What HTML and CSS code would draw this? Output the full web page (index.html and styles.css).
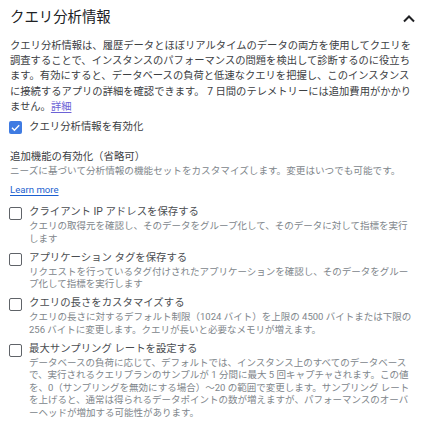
FILE: index.html
```html
<!DOCTYPE html>
<html lang="ja">
<head>
<meta charset="utf-8">
<link rel="stylesheet" href="styles.css">
</head>
<body>
<div class="panel">
  <header class="panel-head">
    <h2 class="panel-title">クエリ分析情報</h2>
    <span class="collapse" aria-label="折りたたむ">
      <svg width="12" height="8" viewBox="0 0 12 8"><polyline points="1,6.5 6,1.5 11,6.5" fill="none" stroke="#202124" stroke-width="2"/></svg>
    </span>
  </header>
  <p class="intro">クエリ分析情報は、履歴データとほぼリアルタイムのデータの両方を使用してクエリを<br>調査することで、インスタンスのパフォーマンスの問題を検出して診断するのに役立ち<br>ます。有効にすると、データベースの負荷と低速なクエリを把握し、このインスタンス<br>に接続するアプリの詳細を確認できます。 7 日間のテレメトリーには追加費用がかかり<br>ません。<a class="link" href="#">詳細</a></p>
  <label class="check-row">
    <span class="box checked">
      <svg width="13" height="13" viewBox="0 0 13 13"><polyline points="3,6.8 5.4,9.2 10.2,4.2" fill="none" stroke="#fff" stroke-width="1.4"/></svg>
    </span>
    <span class="check-label">クエリ分析情報を有効化</span>
  </label>
  <section class="extras">
    <div class="extras-title">追加機能の有効化（省略可）</div>
    <div class="extras-sub">ニーズに基づいて分析情報の機能セットをカスタマイズします。変更はいつでも可能です。</div>
    <a class="more" href="#">Learn more</a>
    <ul class="options">
      <li class="option">
        <span class="box"></span>
        <div class="option-body">
          <div class="option-title">クライアント IP アドレスを保存する</div>
          <div class="option-desc">クエリの取得元を確認し、そのデータをグループ化して、そのデータに対して指標を実行<br>します</div>
        </div>
      </li>
      <li class="option">
        <span class="box"></span>
        <div class="option-body">
          <div class="option-title">アプリケーション タグを保存する</div>
          <div class="option-desc">リクエストを行っているタグ付けされたアプリケーションを確認し、そのデータをグルー<br>プ化して指標を実行します</div>
        </div>
      </li>
      <li class="option">
        <span class="box"></span>
        <div class="option-body">
          <div class="option-title">クエリの長さをカスタマイズする</div>
          <div class="option-desc">クエリの長さに対するデフォルト制限（1024 バイト）を上限の 4500 バイトまたは下限の<br>256 バイトに変更します。クエリが長いと必要なメモリが増えます。</div>
        </div>
      </li>
      <li class="option">
        <span class="box"></span>
        <div class="option-body">
          <div class="option-title">最大サンプリング レートを設定する</div>
          <div class="option-desc">データベースの負荷に応じて、デフォルトでは、インスタンス上のすべてのデータベース<br>で、実行されるクエリプランのサンプルが 1 分間に最大 5 回キャプチャされます。この値<br>を、0（サンプリングを無効にする場合）～20 の範囲で変更します。サンプリング レート<br>を上げると、通常は得られるデータポイントの数が増えますが、パフォーマンスのオーバ<br>ーヘッドが増加する可能性があります。</div>
        </div>
      </li>
    </ul>
  </section>
</div>
</body>
</html>
```
FILE: styles.css
```css
html, body {
  margin: 0;
  background: #ffffff;
}
body {
  font-family: Roboto, "Noto Sans CJK JP", sans-serif;
  color: #3c4043;
}
.panel {
  padding: 8px 10px 0 10px;
}
.panel-head {
  display: flex;
  align-items: center;
  justify-content: space-between;
  height: 20px;
}
.panel-title {
  margin: 0;
  font-size: 14.4px;
  font-weight: 400;
  line-height: 20px;
  color: #202124;
}
.collapse {
  display: flex;
  padding-right: 19px;
  padding-top: 2px;
}
.intro {
  margin: 10px 0 0;
  font-size: 10.3px;
  line-height: 15.2px;
  color: #3c4043;
  white-space: nowrap;
}
.link {
  color: #6c62d6;
  text-decoration: underline;
  text-underline-offset: 2px;
}
.check-row {
  display: flex;
  align-items: center;
  gap: 7px;
  height: 16px;
  margin: 5px 0 0 -1px;
}
.box {
  flex: none;
  width: 13px;
  height: 13px;
  box-sizing: border-box;
  border: 1.5px solid #5f6368;
  border-radius: 2px;
  display: block;
}
.box.checked {
  border: none;
  background: #3f7be2;
}
.box.checked svg {
  display: block;
}
.check-label {
  font-size: 10.4px;
  line-height: 16px;
  color: #3c4043;
}
.extras {
  margin-top: 15px;
}
.extras-title {
  font-size: 10.4px;
  line-height: 14px;
  color: #3c4043;
}
.extras-sub {
  font-size: 9.6px;
  line-height: 14px;
  color: #80868b;
  white-space: nowrap;
}
.more {
  display: inline-block;
  font-size: 9.6px;
  line-height: 14px;
  color: #1a5fd0;
  text-decoration: underline;
  text-underline-offset: 2px;
}
.options {
  list-style: none;
  margin: 7px 0 0 -1px;
  padding: 0;
  display: flex;
  flex-direction: column;
  gap: 4.5px;
}
.option {
  display: flex;
  gap: 7px;
  align-items: flex-start;
}
.option .box {
  margin-top: 3px;
}
.option-title {
  font-size: 10.4px;
  line-height: 16px;
  color: #4a4d51;
}
.option-desc {
  font-size: 9.5px;
  line-height: 12.5px;
  color: #80868b;
  white-space: nowrap;
}
```
